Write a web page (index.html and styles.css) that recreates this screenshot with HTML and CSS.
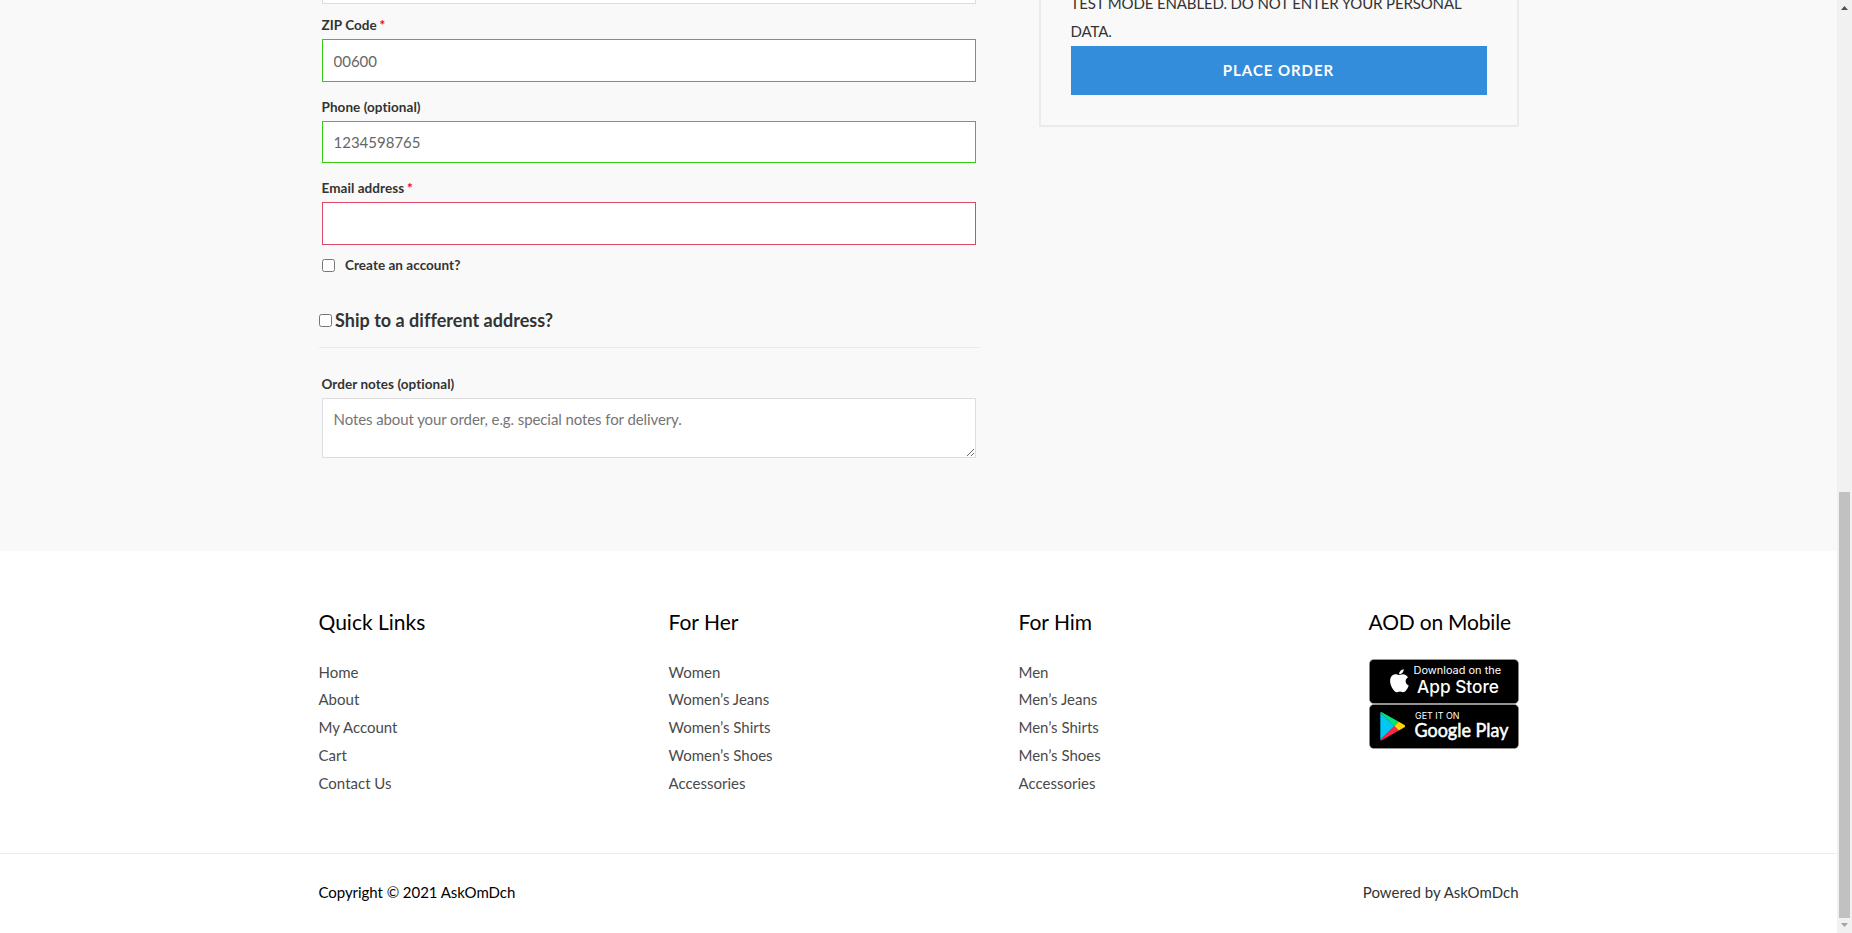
FILE: index.html
```html
<!DOCTYPE html>
<html lang="en">
<head>
<meta charset="utf-8">
<title>Checkout – AskOmDch</title>
<link rel="stylesheet" href="styles.css">
</head>
<body>
<div class="page">
  <main class="checkout">
    <div class="container checkout-cols">
      <form class="billing">
        <div class="fields">
          <div class="prev-input"></div>
          <label class="label" for="zip">ZIP Code <span class="req">*</span></label>
          <input class="input valid zip" id="zip" type="text" value="00600">
          <label class="label spaced" for="phone">Phone (optional)</label>
          <input class="input valid" id="phone" type="text" value="1234598765">
          <label class="label spaced" for="email">Email address <span class="req">*</span></label>
          <input class="input invalid" id="email" type="text">
          <label class="create"><input class="check" type="checkbox"><span>Create an account?</span></label>
        </div>
        <h3 class="ship"><input class="check" type="checkbox"><span>Ship to a different address?</span></h3>
        <div class="fields">
          <label class="label notes-label" for="notes">Order notes (optional)</label>
          <textarea class="input notes" id="notes" placeholder="Notes about your order, e.g. special notes for delivery."></textarea>
        </div>
      </form>
      <aside class="order">
        <p class="order-text">TEST MODE ENABLED. DO NOT ENTER YOUR PERSONAL DATA.</p>
        <button class="place" type="button">PLACE ORDER</button>
      </aside>
    </div>
  </main>
  <footer class="footer">
    <div class="container widgets">
      <section class="widget"><h2>Quick Links</h2><ul><li>Home</li><li>About</li><li>My Account</li><li>Cart</li><li>Contact Us</li></ul></section>
      <section class="widget"><h2>For Her</h2><ul><li>Women</li><li>Women’s Jeans</li><li>Women’s Shirts</li><li>Women’s Shoes</li><li>Accessories</li></ul></section>
      <section class="widget"><h2>For Him</h2><ul><li>Men</li><li>Men’s Jeans</li><li>Men’s Shirts</li><li>Men’s Shoes</li><li>Accessories</li></ul></section>
      <section class="widget"><h2 class="mobile">AOD on Mobile</h2>
        <div class="badges">
          <svg class="badge" viewBox="0 0 150 45">
            <rect x=".4" y=".4" width="149.2" height="44.2" rx="4.5" fill="#000" stroke="#a6a6a6" stroke-width=".6"/>
            <path fill="#fff" d="M34.700 10.200c.2 2.600-2 5.100-4.500 5-.3-2.400 2-4.800 4.500-5zM39 18.200c-3.500 2.100-3 6.800.7 8.200-.6 1.900-1.500 3.500-2.700 5-1.200 1.500-2.400 2.100-3.900 1.500-1.600-.7-2.600-.7-4.200 0-1.500.6-2.600.2-3.800-1.200-3.500-4-5.600-10.800-2.400-14.600 1.700-2 4.200-2.300 6.200-1.400 1 .4 1.500.4 2.500 0 2.700-1.200 5.700-.5 7.600 2.500z"/>
            <text class="badge-text" x="44.600" y="15" font-size="9.700" textLength="87.500" lengthAdjust="spacingAndGlyphs">Download on the</text>
            <text class="badge-text" x="48" y="33.500" font-size="17.500" textLength="82" font-weight="500" lengthAdjust="spacingAndGlyphs">App Store</text>
          </svg>
          <svg class="badge" viewBox="0 0 150 45">
            <rect x=".4" y=".4" width="149.2" height="44.2" rx="4.5" fill="#000" stroke="#a6a6a6" stroke-width=".6"/>
            <path fill="#00c8f5" d="M11.300 8.500v27.500l14.300-13.900z"/>
            <path fill="#00e576" d="M11.300 8.500q.8-.8 2-.1l16.500 9.300-4.500 4.400z"/>
            <path fill="#f5294a" d="M11.300 36q.8.800 2 .1l16.500-9.500-4.500-4.500z"/>
            <path fill="#ffd500" d="M29.800 17.700l5.700 3.300q1.500 1 0 2.200l-5.700 3.400-4.500-4.500z"/>
            <text class="badge-text" x="46" y="14.500" font-size="9.500" textLength="44.500" lengthAdjust="spacingAndGlyphs">GET IT ON</text>
            <text class="badge-text play" x="45.500" y="33.300" font-size="18.500" textLength="94" lengthAdjust="spacingAndGlyphs">Google Play</text>
          </svg>
        </div>
      </section>
    </div>
    <div class="bottom"><div class="container bottom-row"><span>Copyright © 2021 AskOmDch</span><span class="powered">Powered by AskOmDch</span></div></div>
  </footer>
</div>
<div class="scrollbar">
  <svg class="arrow" viewBox="0 0 15 17"><path fill="#505050" d="M4 10h7L7.500 6z"/></svg>
  <div class="thumb"></div>
  <svg class="arrow" viewBox="0 0 15 15"><path fill="#a3a3a3" d="M4 5h7L7.500 9z"/></svg>
</div>
</body>
</html>
```
FILE: styles.css
```css
* { box-sizing: border-box; }
body { margin: 0; display: flex; height: 933px; overflow: hidden; font: 15px/28px Lato, sans-serif; color: #333; background: #fff; }
.page { flex: 1; display: flex; flex-direction: column; }
.container { width: 1200px; margin: 0 auto; }
.checkout { height: 551px; background: #f9f9f9; overflow: hidden; }
.checkout-cols { display: flex; justify-content: space-between; align-items: flex-start; }
.billing { width: 660px; }
.fields { padding: 0 3px; display: flex; flex-direction: column; }
.prev-input { height: 4px; margin-bottom: 7px; background: #fff; border: 1px solid #ddd; border-top: 0; }
.label { height: 28px; line-height: 28px; font-size: 13.5px; font-weight: 700; letter-spacing: .06px; }
.spaced { margin-top: 11px; }
.req { color: #f00; margin-left: -.6px; }
.input { display: block; width: 100%; height: 42.6px; padding: 0 11px; border: 1px solid #ddd; border-radius: 0; background: #fff; color: #666; font: 15px Lato, sans-serif; outline: 0; }
.zip { padding-top: 1px; }
.valid { border-color: #3c1; }
.invalid { border-color: #dd4768; }
.check { width: 13px; height: 13px; margin: 0; flex: none; }
.create { display: flex; align-items: center; gap: 10.5px; height: 28px; margin-top: 7px; font-size: 13.5px; font-weight: 700; letter-spacing: .04px; }
.create span { margin-top: -2px; }
.ship { display: flex; align-items: center; gap: 3.5px; height: 54px; margin: 14px 0 0; border-bottom: 1px solid #ebebeb; font-size: 18px; font-weight: 700; letter-spacing: .02px; }
.notes-label { margin-top: 22px; }
.notes { height: 60px; padding: 10px 11px; line-height: 21px; letter-spacing: -.09px; resize: vertical; }
.notes::placeholder { color: #757575; }
.order { width: 480px; height: 127px; padding: 0 30px; border: 2px solid #ebebeb; border-top: 0; }
.order-text { margin: -11px 0 1px; line-height: 28px; letter-spacing: -.13px; }
.place { display: block; width: 100%; height: 49px; padding: 0 0 2px; border: 0; background: #348dda; color: #fff; font: 700 15px Lato, sans-serif; letter-spacing: .95px; }
.footer { flex: 1; background: #fff; }
.widgets { display: flex; justify-content: space-between; height: 302px; padding-top: 57px; }
.widget { width: 150px; }
.widget h2 { margin: 0 0 22.6px; font-size: 21px; line-height: 28px; font-weight: 400; color: #000; white-space: nowrap; }
.widget .mobile { margin-bottom: 23px; letter-spacing: -.2px; }
.widget ul { margin: 0; padding: 0; list-style: none; color: #4a4a4a; line-height: 27.857px; }
.badges { display: flex; flex-direction: column; }
.badge { display: block; width: 150px; height: 45px; }
.badge-text { font-family: Inter, sans-serif; fill: #fff; }
.play { font-family: Lato, sans-serif; stroke: #fff; stroke-width: .5px; }
.bottom { border-top: 1px solid #ebebeb; }
.bottom-row { display: flex; justify-content: space-between; padding-top: 24px; color: #000; letter-spacing: -.05px; }
.powered { color: #333; letter-spacing: 0; }
.scrollbar { display: flex; flex-direction: column; width: 15px; height: 933px; background: #f1f1f1; }
.thumb { width: 11px; height: 426px; margin: 475px 2px 0; background: #c1c1c1; }
.arrow { width: 15px; flex: none; }
```
